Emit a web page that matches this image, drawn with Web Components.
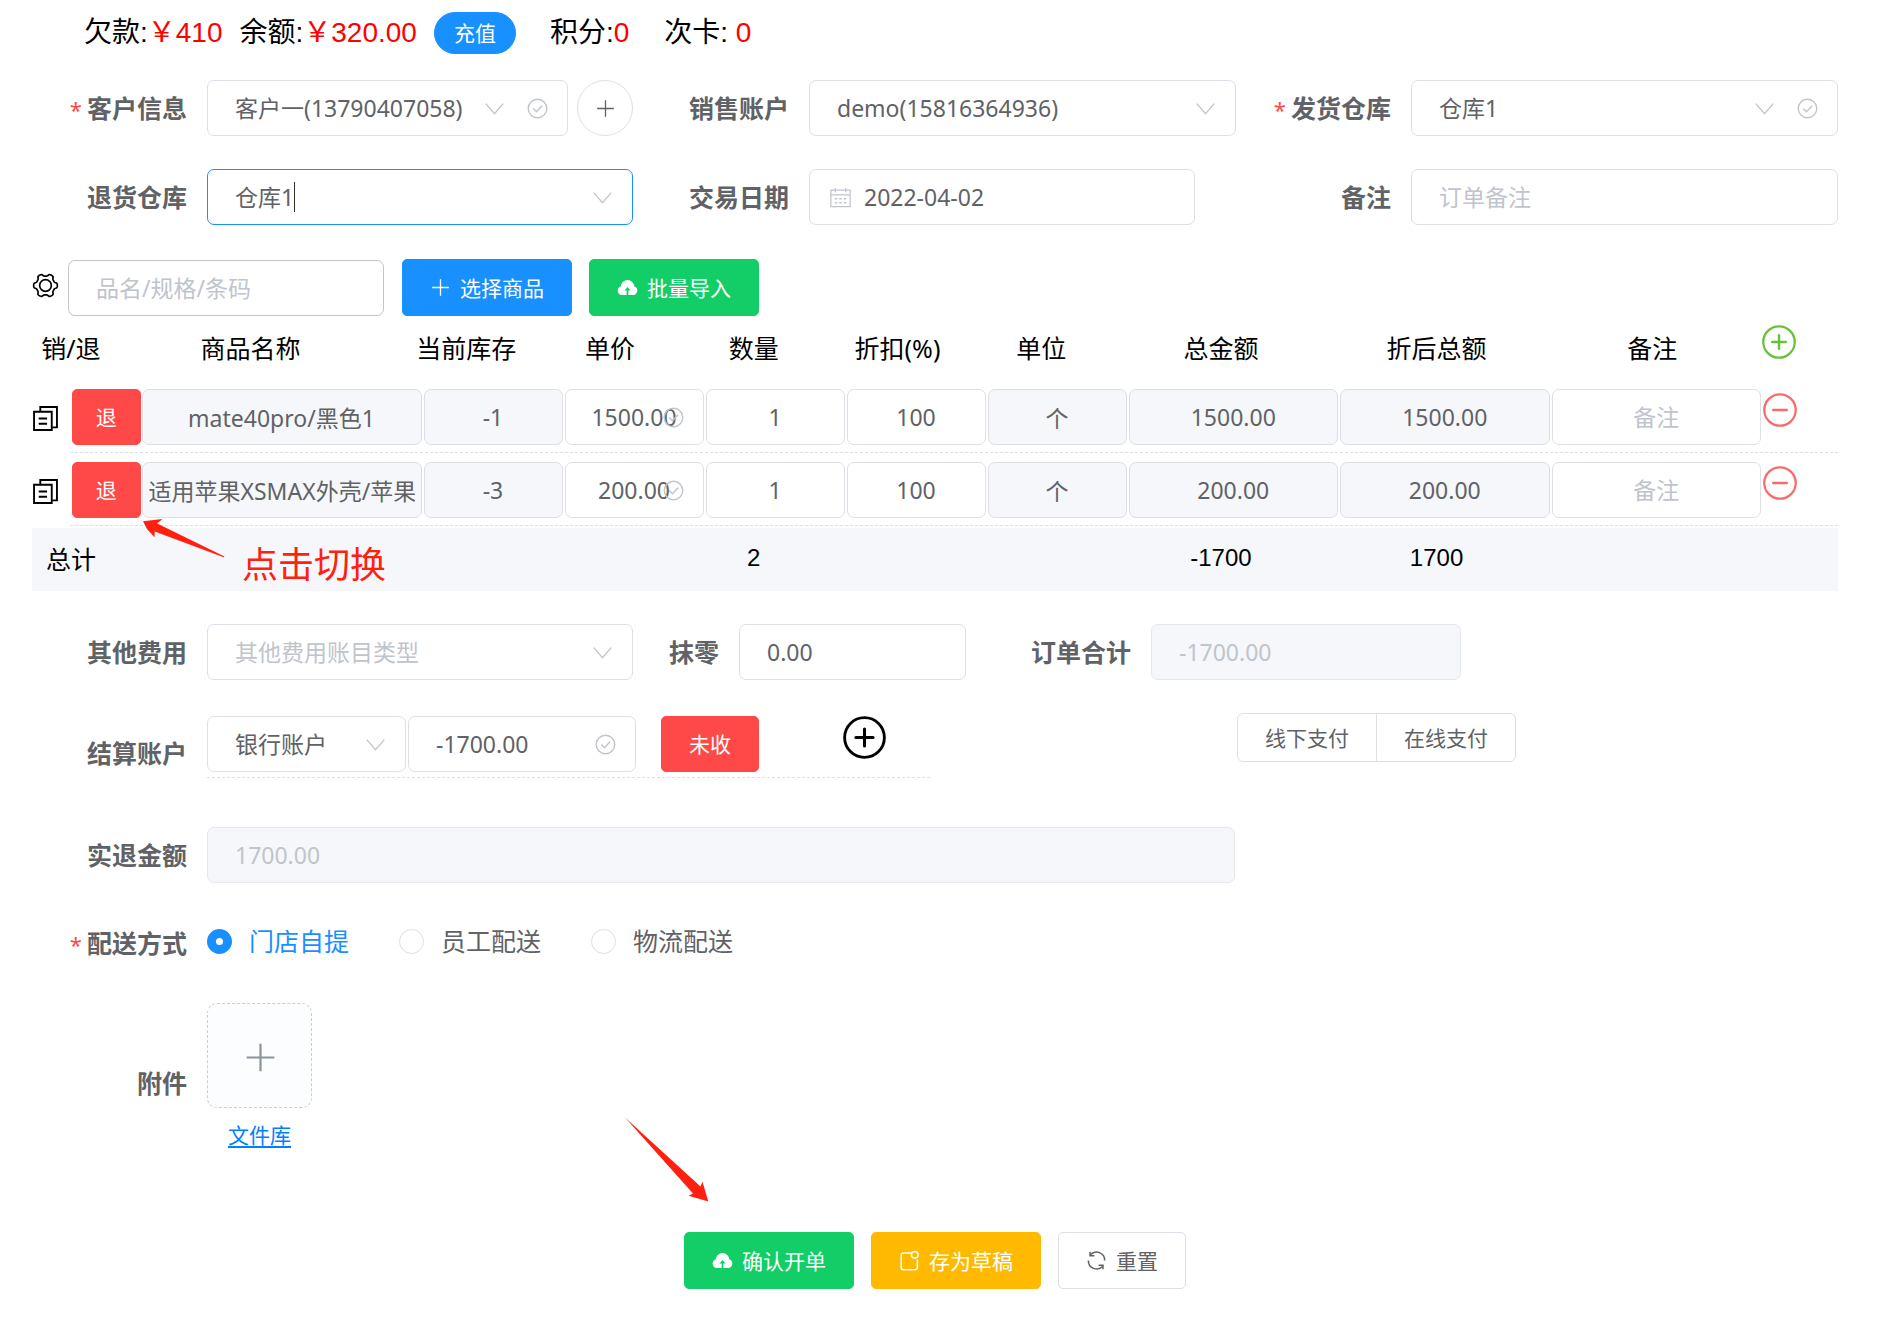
<!DOCTYPE html>
<html lang="zh-CN">
<head>
<meta charset="utf-8">
<title>销售开单</title>
<style>
body{margin:0;background:#fff;color:#000;font-family:"Liberation Sans","Noto Sans CJK SC",sans-serif}
</style>
</head>
<body>
<sale-order-page></sale-order-page>
<script>
const FONT = '"Noto Sans","Noto Sans CJK SC",sans-serif';
const BASE = `*{box-sizing:border-box}button,input,select{font-family:inherit;margin:0}`;

/* Outline of the settings gear: six rounded teeth around the centre */
const gearPath = (() => {
  const pts = [];
  for (let i = 0; i < 120; i++) {
    const a = i * Math.PI / 60;
    const r = 10.2 + 1.2 * Math.tanh(2.2 * Math.cos(6 * a));
    pts.push((12 + r * Math.cos(a)).toFixed(2) + ' ' + (12 + r * Math.sin(a)).toFixed(2));
  }
  return 'M' + pts.join('L') + 'Z';
})();

const ICONS = {
  down: '<path d="M2 6.5 12 18l10-11.5" stroke-width="1.5"/>',
  check: '<circle cx="12" cy="12" r="10.6" stroke-width="1.6"/><path d="m7.2 12 3.6 3.8 6.4-7" stroke-width="1.6"/>',
  plus: '<path d="M12 2.5v19M2.5 12h19" stroke-width="1.5"/>',
  circlePlus: '<circle cx="12" cy="12" r="11.1" stroke-width="1.6"/><path d="M12 7.2v9.6M7.2 12h9.6" stroke-width="1.7" stroke-linecap="round"/>',
  circleMinus: '<circle cx="12" cy="12" r="11.1" stroke-width="1.6"/><path d="M7.2 12h9.6" stroke-width="1.7" stroke-linecap="round"/>',
  date: '<path d="M1 3.5h22v19H1zM1 9h22M6 1v5M18 1v5" stroke-width="1.4"/><path d="M5.5 13.5h13M5.5 18h13" stroke-width="1.6" stroke-dasharray="3 2"/>',
  gear: `<path d="${gearPath}" stroke-width="1.6" stroke-linejoin="round"/><circle cx="12" cy="12" r="5.6" stroke-width="1.6"/>`,
  copy: '<path d="M1 5.5h17V23H1zM7 5V1h16v19.5h-4" stroke-width="1.8"/><path d="M5.5 12h8M5.5 17h8" stroke-width="1.8"/>',
  cloud: '<path fill="currentColor" stroke="none" d="M11 20.5v-5.2H8.6L12 11.4l3.4 3.9H13v5.2h5.3a5 5 0 0 0 1.6-9.7A8 8 0 0 0 12 3.5a8 8 0 0 0-7.9 7.3 5 5 0 0 0 1.6 9.7z"/>',
  draft: '<path d="M13.5 3.5H5A2.5 2.5 0 0 0 2.5 6v14A2.5 2.5 0 0 0 5 22.5h13.5A2.5 2.5 0 0 0 21 20v-9" stroke-width="1.8"/><circle cx="18" cy="5.5" r="3.8" stroke-width="1.8"/>',
  refresh: '<path d="M5 5.5A9.3 9.3 0 0 1 21.3 12M19 18.5A9.3 9.3 0 0 1 2.7 12" stroke-width="1.7"/><path d="M4.6 2v4.5h5M19.4 22v-4.5h-5" stroke-width="1.7"/>'
};

function define(name, render) {
  customElements.define(name, class extends HTMLElement {
    connectedCallback() {
      if (this.shadowRoot) return;
      const root = this.attachShadow({ mode: 'open' });
      const tpl = document.createElement('template');
      tpl.innerHTML = render(this);
      root.append(tpl.content.cloneNode(true));
    }
  });
}

define('ui-icon', el => `<style>
  :host{display:block;flex:none;width:var(--s,21px);height:var(--s,21px)}
  svg{display:block;width:100%;height:100%;fill:none;stroke:currentColor;overflow:visible}
  </style><svg viewBox="0 0 24 24" aria-hidden="true">${ICONS[el.getAttribute('name')]}</svg>`);

define('ui-button', el => {
  const icon = el.getAttribute('icon');
  return `<style>${BASE}
  :host{display:block;flex:none}
  button{display:flex;align-items:center;justify-content:center;gap:9px;width:100%;height:var(--h,57px);padding:0 var(--px,27px);
    border:1px solid #dcdfe6;border-radius:5px;background:#fff;color:#606266;font-size:21px;line-height:24px;cursor:pointer;font-family:${FONT};white-space:nowrap}
  :host([kind]) button{color:#fff;border-color:transparent}
  :host([kind=primary]) button{background:#1890ff;border-color:#1890ff}
  :host([kind=success]) button{background:#13ce66;border-color:#13ce66}
  :host([kind=warning]) button{background:#ffba00;border-color:#ffba00}
  :host([kind=danger]) button{background:#ff4949;border-color:#ff4949}
  :host([round]) button{border-radius:21px}
  :host([circle]) button{width:56px;height:56px;border-radius:50%;padding:0}
  </style><button type="button" ${el.title ? `aria-label="${el.title}"` : ''}>${icon ? `<ui-icon name="${icon}"></ui-icon>` : ''}<slot></slot></button>`;
});

/* Bare icon that can be pressed */
define('icon-button', el => `<style>${BASE}
  :host{display:block;flex:none}
  button{display:block;padding:0;border:0;background:none;color:inherit;cursor:pointer}
  </style><button type="button" aria-label="${el.getAttribute('label')}"><ui-icon name="${el.getAttribute('name')}"></ui-icon></button>`);

/* Labelled control: text box or drop-down, with optional icons inside */
define('form-field', el => {
  const a = n => el.getAttribute(n) || '';
  const has = n => el.hasAttribute(n);
  const name = a('label') ? 'id="c"' : `aria-label="${a('name')}"`;
  const control = a('type') === 'select'
    ? `<select ${name}><option>${a('value') || a('placeholder')}</option></select>`
    : `<input ${name} type="text" value="${a('value')}" placeholder="${a('placeholder')}" ${has('disabled') ? 'disabled' : ''} ${has('readonly') ? 'readonly' : ''}>`;
  return `<style>${BASE}
  :host{display:flex;height:56px;min-width:0;font-family:${FONT}}
  label{flex:none;width:var(--label,175px);padding-right:20px;text-align:right;font-size:25px;font-weight:700;line-height:56px;color:#606266;white-space:nowrap}
  i{font-style:normal;font-weight:400;font-size:22px;line-height:1;color:#ff4949;margin-right:5px}
  .box{position:relative;flex:1;min-width:0;height:56px}
  input,select{display:block;width:100%;height:56px;padding:0 27px;border:1px solid #dcdfe6;border-radius:7px;background:#fff;
    color:#606266;font-size:23px;line-height:54px;outline:0;appearance:none;opacity:1}
  input::placeholder{color:#c0c4cc;opacity:1}
  :host([empty]) select{color:#c0c4cc}
  :host([active]) select{border-color:#1890ff}
  :host([strong]) input{border-color:#c0c4cc}
  :host([center]) input{text-align:center;padding:0 6px}
  input:disabled{background:#f5f7fa;border-color:#e4e7ed;color:#c0c4cc}
  input:read-only:not(:disabled){background:#f5f7fa}
  :host([prefix]) input{padding-left:54px}
  .icons{position:absolute;top:0;bottom:0;right:20px;display:flex;align-items:center;gap:22px;color:#c0c4cc;pointer-events:none}
  .pre{right:auto;left:21px}
  .caret{position:absolute;left:87px;top:13px;width:1px;height:30px;background:#303133}
  </style>
  ${a('label') ? `<label for="c">${has('required') ? '<i>*</i>' : ''}${a('label')}</label>` : ''}
  <div class="box">${control}
    ${has('prefix') ? '<div class="icons pre"><ui-icon name="date"></ui-icon></div>' : ''}
    <div class="icons">${a('type') === 'select' ? '<ui-icon name="down"></ui-icon>' : ''}${has('check') ? '<ui-icon name="check"></ui-icon>' : ''}</div>
    ${has('active') ? '<span class="caret"></span>' : ''}
  </div><slot></slot>`;
});

define('account-summary', () => `<style>
  :host{display:flex;align-items:center;height:42px;padding-left:52px;gap:17px;font-size:28px;line-height:42px;white-space:nowrap}
  b{font-weight:400;color:#f00}
  ui-button{--h:42px;--px:18px;width:82px}
  .pts{display:flex;gap:35px;padding-left:17px}
  </style>
  <span>欠款:<b>￥410</b></span><span>余额:<b>￥320.00</b></span>
  <ui-button kind="primary" round>充值</ui-button>
  <div class="pts"><span>积分:<b>0</b></span><span>次卡: <b>0</b></span></div>`);

const rows = [
  ['mate40pro/黑色1', '-1', '1500.00', '1500.00', '1500.00'],
  ['适用苹果XSMAX外壳/苹果', '-3', '200.00', '200.00', '200.00']
];
const cell = (span, inner) => `<td style="grid-column:span ${span}">${inner}</td>`;
const box = (name, value, extra = '') => `<form-field center name="${name}" value="${value}" ${extra}></form-field>`;

define('order-table', () => `<style>${BASE}
  :host{display:block;font-size:25px}
  table,thead,tbody,tfoot{display:block;width:100%}
  tr{display:grid}
  th,td{display:block;padding:0;font-weight:400;text-align:center;white-space:nowrap;min-width:0}
  thead tr,tfoot tr{grid-template-columns:repeat(24,minmax(0,1fr)) 78px;padding:0 0 4px 3px;align-items:center}
  thead tr{height:66px;font-family:${FONT}}
  tfoot tr{height:63px;background:#f5f7fa;font-size:24px}
  tfoot th{font-size:25px}
  tbody tr{grid-template-columns:38px repeat(24,minmax(0,1fr)) 76px;padding-top:7px;height:73px;align-content:start}
  tbody tr::after{content:"";grid-column:2/-1;margin-top:7px;height:1px;background:repeating-linear-gradient(90deg,#dcdfe6 0 3px,transparent 3px 5px)}
  tbody td{padding:0 1px}
  tbody td:nth-child(2){padding:0 0 0 2px}
  tbody td:first-child{padding:17px 0 0 1px}
  tbody td:last-child{padding:4px 0 0 1px}
  icon-button{--s:25px}
  .add{--s:34px;color:#67c23a;margin:-10px 0 0 2px}
  .del{--s:34px;color:#f56c6c}
  ui-button{--h:56px;--px:0px}
  </style>
  <table>
  <thead><tr>
    <th style="grid-column:span 1">销/退</th><th style="grid-column:span 4">商品名称</th>
    ${['当前库存', '单价', '数量', '折扣(%)', '单位'].map(t => `<th style="grid-column:span 2">${t}</th>`).join('')}
    ${['总金额', '折后总额', '备注'].map(t => `<th style="grid-column:span 3">${t}</th>`).join('')}
    <th><icon-button class="add" name="circlePlus" label="添加一行"></icon-button></th>
  </tr></thead>
  <tbody>${rows.map(r => `<tr>
    <td><icon-button name="copy" label="复制"></icon-button></td>
    ${cell(1, '<ui-button kind="danger">退</ui-button>')}
    ${cell(4, box('商品名称', r[0], 'readonly'))}
    ${cell(2, box('当前库存', r[1], 'readonly'))}
    ${cell(2, box('单价', r[2], 'check'))}
    ${cell(2, box('数量', '1'))}
    ${cell(2, box('折扣', '100'))}
    ${cell(2, box('单位', '个', 'readonly'))}
    ${cell(3, box('总金额', r[3], 'readonly'))}
    ${cell(3, box('折后总额', r[4], 'readonly'))}
    ${cell(3, box('备注', '', 'placeholder="备注"'))}
    <td><icon-button class="del" name="circleMinus" label="删除"></icon-button></td></tr>`).join('')}
  </tbody>
  <tfoot><tr>
    <th style="grid-column:span 1">总计</th><td style="grid-column:10/12">2</td>
    <td style="grid-column:16/19">-1700</td><td style="grid-column:19/22">1700</td>
  </tr></tfoot>
  </table>`);

define('radio-options', () => `<style>${BASE}
  :host{display:block;font-family:${FONT};color:#606266;font-size:25px}
  fieldset{display:flex;align-items:flex-start;height:54px;margin:0;padding:0;border:0;min-width:0}
  legend{float:left;width:175px;padding:0 20px 0 0;text-align:right;font-weight:700;line-height:54px}
  i{font-style:normal;font-weight:400;font-size:22px;line-height:1;color:#ff4949;margin-right:5px}
  .set{display:flex;gap:50px;height:50px;align-items:center}
  label{display:flex;align-items:center;gap:17px;white-space:nowrap;line-height:50px}
  input{appearance:none;width:25px;height:25px;margin:0;border:1px solid #dcdfe6;border-radius:50%;background:#fff}
  input:checked{border:9px solid #1890ff}
  label:has(:checked){color:#1890ff}
  </style><fieldset><legend><i>*</i>配送方式</legend><div class="set">
  <label><input type="radio" name="d" checked>门店自提</label>
  <label><input type="radio" name="d">员工配送</label>
  <label><input type="radio" name="d">物流配送</label></div></fieldset>`);

define('settle-row', () => `<style>${BASE}
  :host{display:flex;align-items:flex-start;height:81px;font-family:${FONT}}
  .name{width:175px;padding-right:20px;text-align:right;font-size:25px;font-weight:700;line-height:80px;color:#606266}
  .line{display:flex;align-items:flex-start;width:724px;height:65px;padding-top:3px;background:repeating-linear-gradient(90deg,#dcdfe6 0 3px,transparent 3px 5px) 0 100%/100% 1px no-repeat}
  .acc{width:199px;margin-right:2px}
  .sum{width:228px;margin-right:25px}
  ui-button{--h:56px}
  icon-button{--s:43px;color:#000;margin-left:84px}
  .pay{display:flex;margin-left:306px}
  .pay button{height:49px;padding:0 27px;border:1px solid #dcdfe6;background:#fff;color:#606266;font-size:21px;line-height:24px}
  .pay button:first-child{border-radius:6px 0 0 6px}
  .pay button:last-child{border-radius:0 6px 6px 0;margin-left:-1px}
  </style>
  <span class="name">结算账户</span>
  <div class="line">
    <form-field class="acc" type="select" name="结算账户" value="银行账户"></form-field>
    <form-field class="sum" name="结算金额" value="-1700.00" check></form-field>
    <ui-button kind="danger">未收</ui-button>
    <icon-button name="circlePlus" label="添加账户"></icon-button>
  </div>
  <div class="pay"><button type="button">线下支付</button><button type="button">在线支付</button></div>`);

define('file-upload', () => `<style>${BASE}
  :host{display:flex;height:160px;font-family:${FONT}}
  .name{width:175px;padding-right:20px;text-align:right;font-size:25px;font-weight:700;line-height:160px;color:#606266}
  .col{display:flex;flex-direction:column;align-items:center;width:105px}
  button{display:flex;align-items:center;justify-content:center;width:105px;height:105px;border:1px dashed #c9ced6;border-radius:10px;background:#fbfdff;color:#8c939d;padding:4px 0 0 2px}
  ui-icon{--s:35px}
  a{font-size:21px;line-height:55px;color:#007fff;text-decoration:underline;text-decoration-thickness:2px;text-underline-offset:3px}
  </style><span class="name">附件</span><div class="col"><button type="button" aria-label="上传附件"><ui-icon name="plus"></ui-icon></button><a href="#">文件库</a></div>`);

/* Red hand-placed notes that lie over the form */
define('guide-marks', () => `<style>
  :host{position:absolute;inset:0;pointer-events:none;color:#ff2010}
  svg{position:absolute;left:0;top:0;width:100%;height:100%;overflow:visible;fill:currentColor}
  span{position:absolute;left:242px;top:540px;font:36px/44px "Noto Sans CJK SC",sans-serif}
  </style>
  <svg aria-hidden="true"><path d="M143 521.3 162.4 519 157.2 523.5 224.5 556.5 223.7 557.3 154.7 531.5 154.5 537.2 147 529z"/>
  <path d="M625 1117.5 700.5 1186.5 702.5 1181.7 708.3 1201.4 688.6 1195.7 693 1193.5z"/></svg>
  <span>点击切换</span>`);

define('sale-order-page', () => `<style>${BASE}
  :host{display:block;position:relative;padding:12px 39px 46px 32px}
  .row{display:grid;grid-template-columns:repeat(3,minmax(0,1fr));margin-top:33px}
  .row.first{margin-top:26px}
  .row>:first-child{padding-right:1px}
  .circle{margin-left:9px}
  .date{padding-right:41px}
  .tools{display:flex;align-items:center;margin-top:34px;height:57px}
  .tools icon-button{--s:25px;margin:-5px 10px 0 1px}
  .tools form-field{width:316px;margin-right:18px}
  .tools ui-button{margin-right:17px}
  .fees{display:flex;margin-top:33px}
  .fees .kind{width:calc(100% / 3);padding-right:1px}
  .fees .round{--label:105px;width:332px;margin-right:10px}
  .fees .total{width:485px}
  settle-row,radio-options,file-upload{margin-top:33px}
  .back{width:calc(200% / 3);margin-top:33px;padding-right:1px}
  .actions{display:flex;justify-content:center;gap:17px;margin-top:69px}
  </style>
  <account-summary></account-summary>
  <div class="row first">
    <form-field type="select" label="客户信息" required value="客户一(13790407058)" check><ui-button class="circle" circle icon="plus" title="新增客户"></ui-button></form-field>
    <form-field type="select" label="销售账户" value="demo(15816364936)"></form-field>
    <form-field type="select" label="发货仓库" required value="仓库1" check></form-field>
  </div>
  <div class="row">
    <form-field type="select" label="退货仓库" value="仓库1" active></form-field>
    <form-field class="date" label="交易日期" value="2022-04-02" prefix></form-field>
    <form-field label="备注" placeholder="订单备注"></form-field>
  </div>
  <div class="tools">
    <icon-button name="gear" label="设置"></icon-button>
    <form-field name="搜索商品" placeholder="品名/规格/条码" strong></form-field>
    <ui-button kind="primary" icon="plus">选择商品</ui-button>
    <ui-button kind="success" icon="cloud">批量导入</ui-button>
  </div>
  <order-table></order-table>
  <div class="fees">
    <form-field class="kind" type="select" label="其他费用" placeholder="其他费用账目类型" empty></form-field>
    <form-field class="round" label="抹零" value="0.00"></form-field>
    <form-field class="total" label="订单合计" value="-1700.00" disabled></form-field>
  </div>
  <settle-row></settle-row>
  <form-field class="back" label="实退金额" value="1700.00" disabled></form-field>
  <radio-options></radio-options>
  <file-upload></file-upload>
  <div class="actions">
    <ui-button kind="success" icon="cloud">确认开单</ui-button>
    <ui-button kind="warning" icon="draft">存为草稿</ui-button>
    <ui-button icon="refresh">重置</ui-button>
  </div>
  <guide-marks></guide-marks>`);
</script>
</body>
</html>
